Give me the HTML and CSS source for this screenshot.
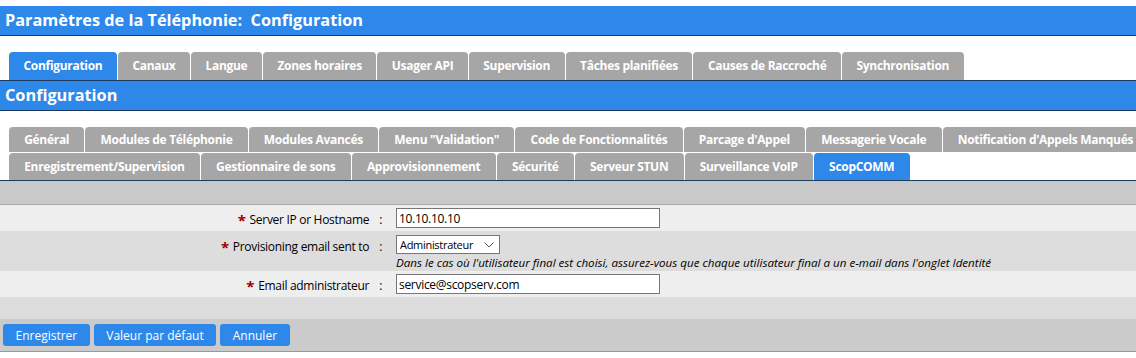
FILE: index.html
```html
<!DOCTYPE html>
<html>
<head>
  <title>Paramètres de la Téléphonie</title>
  <link rel="stylesheet" href="styles.css">
</head>
<body>
  <div class="page-title">Paramètres de la Téléphonie:&nbsp; Configuration</div>

  <div class="tabs main-tabs">
    <div class="tab-row">
      <div class="tab active">Configuration</div>
      <div class="tab">Canaux</div>
      <div class="tab">Langue</div>
      <div class="tab">Zones horaires</div>
      <div class="tab">Usager API</div>
      <div class="tab">Supervision</div>
      <div class="tab">Tâches planifiées</div>
      <div class="tab">Causes de Raccroché</div>
      <div class="tab">Synchronisation</div>
    </div>
  </div>

  <div class="section-title">Configuration</div>

  <div class="tabs sub-tabs">
    <div class="tab-row">
      <div class="tab">Général</div>
      <div class="tab">Modules de Téléphonie</div>
      <div class="tab">Modules Avancés</div>
      <div class="tab">Menu "Validation"</div>
      <div class="tab">Code de Fonctionnalités</div>
      <div class="tab">Parcage d'Appel</div>
      <div class="tab">Messagerie Vocale</div>
      <div class="tab">Notification d'Appels Manqués</div>
    </div>
    <div class="tab-row">
      <div class="tab">Enregistrement/Supervision</div>
      <div class="tab">Gestionnaire de sons</div>
      <div class="tab">Approvisionnement</div>
      <div class="tab">Sécurité</div>
      <div class="tab">Serveur STUN</div>
      <div class="tab">Surveillance VoIP</div>
      <div class="tab active">ScopCOMM</div>
    </div>
  </div>

  <div class="form-panel">
    <div class="form-top"></div>

    <div class="form-row light">
      <div class="form-label"><span class="req">*</span>Server IP or Hostname<span class="colon">:</span></div>
      <div class="form-field">
        <input class="text-input" type="text" value="10.10.10.10">
      </div>
    </div>

    <div class="form-row dark">
      <div class="form-label"><span class="req">*</span>Provisioning email sent to<span class="colon">:</span></div>
      <div class="form-field">
        <div class="select-wrap">
          <select class="select-input">
            <option>Administrateur</option>
            <option>Utilisateur final</option>
          </select>
          <svg class="select-arrow" width="10" height="6" viewBox="0 0 10 6">
            <path d="M0.5 0.5 L5 5 L9.5 0.5" fill="none" stroke="#555555" stroke-width="1"/>
          </svg>
        </div>
        <div class="help-text">Dans le cas où l'utilisateur final est choisi, assurez-vous que chaque utilisateur final a un e-mail dans l'onglet Identité</div>
      </div>
    </div>

    <div class="form-row light">
      <div class="form-label"><span class="req">*</span>Email administrateur<span class="colon">:</span></div>
      <div class="form-field">
        <input class="text-input" type="text" value="service@scopserv.com">
      </div>
    </div>

    <div class="form-bottom"></div>

    <div class="btn-bar">
      <button class="btn">Enregistrer</button>
      <button class="btn">Valeur par défaut</button>
      <button class="btn">Annuler</button>
    </div>
  </div>
</body>
</html>
```

FILE: styles.css
```css
body {
  margin: 0;
  padding-top: 6px;
  font-family: "Open Sans", "Noto Sans", sans-serif;
  background-color: #FFFFFF;
}

.page-title,
.section-title {
  background-color: #2E88EA; /* Blue */
  color: #FFFFFF;
  font-weight: bold;
  font-size: 16.3px;
  height: 29px;
  line-height: 29px;
  padding-left: 5px;
  border-bottom: 1px solid #1B3B5E;
}

.tabs {
  padding-left: 9px;
  border-bottom: 1px solid #1B3B5E;
}

.main-tabs {
  margin-top: 16px;
}

.sub-tabs {
  margin-top: 16px;
}

.tab-row {
  display: flex;
  gap: 1px;
}

.tab {
  background-color: #A6A6A6; /* Gray */
  color: #FFFFFF;
  font-size: 12px;
  font-weight: bold;
  letter-spacing: -0.3px;
  padding: 0 14.5px;
  border-radius: 4px 4px 0 0;
  white-space: nowrap;
}

.main-tabs .tab {
  height: 28px;
  line-height: 28px;
}

.sub-tabs .tab {
  padding: 0 15.2px;
}

.sub-tabs .tab-row:first-child .tab {
  height: 25px;
  line-height: 26px;
  margin-bottom: 1px;
}

.sub-tabs .tab-row:last-child .tab {
  height: 27px;
  line-height: 27px;
}

.tab.active {
  background-color: #2E88EA;
}

.form-panel {
  font-size: 12px;
  color: #000000;
}

.form-top {
  height: 23px;
  background-color: #C9C9C9;
  border-bottom: 1px solid #AAAAAA;
}

.form-row {
  display: flex;
}

.form-row.light {
  background-color: #EEEEEE;
  height: 26px;
  align-items: center;
}

.form-row.dark {
  background-color: #DDDDDD;
  height: 40px;
  padding-top: 4px;
  box-sizing: border-box;
}

.form-label {
  width: 388px;
  text-align: right;
  flex-shrink: 0;
  padding-right: 6px;
  box-sizing: border-box;
  letter-spacing: -0.3px;
}

.req {
  color: #A00000;
  font-weight: bold;
  font-size: 15px;
  margin-right: 4px;
  position: relative;
  top: 2px;
}

.colon {
  margin-left: 10px;
}

.form-field {
  padding-left: 8px;
}

.text-input {
  width: 264px;
  height: 20px;
  box-sizing: border-box;
  border: 1px solid #767676;
  font-family: "Open Sans", "Noto Sans", sans-serif;
  font-size: 12px;
  letter-spacing: -0.3px;
  padding: 0 2px;
  margin: 0;
  background-color: #FFFFFF;
}

.select-wrap {
  position: relative;
  width: 104px;
  height: 19px;
}

.select-input {
  appearance: none;
  width: 104px;
  height: 19px;
  font-family: "Open Sans", "Noto Sans", sans-serif;
  font-size: 11px;
  letter-spacing: -0.3px;
  border: 1px solid #767676;
  border-radius: 0;
  padding: 0 3px;
  margin: 0;
  background-color: #FFFFFF;
  color: #000000;
}

.select-arrow {
  position: absolute;
  right: 6px;
  top: 7px;
  pointer-events: none;
}

.help-text {
  font-style: italic;
  font-size: 11.6px;
  margin-top: 1px;
  white-space: nowrap;
}

.form-bottom {
  height: 22px;
  background-color: #DDDDDD;
}

.btn-bar {
  display: flex;
  gap: 4px;
  padding: 5px 3px 0;
  height: 27px;
  background-color: #CBCBCB;
  border-bottom: 1px solid #999999;
}

.btn {
  background-color: #2E88EA;
  color: #FFFFFF;
  border: none;
  border-radius: 3px;
  font-family: "Open Sans", "Noto Sans", sans-serif;
  font-size: 12px;
  height: 22px;
  padding: 0 12.5px;
  cursor: pointer;
}
```
